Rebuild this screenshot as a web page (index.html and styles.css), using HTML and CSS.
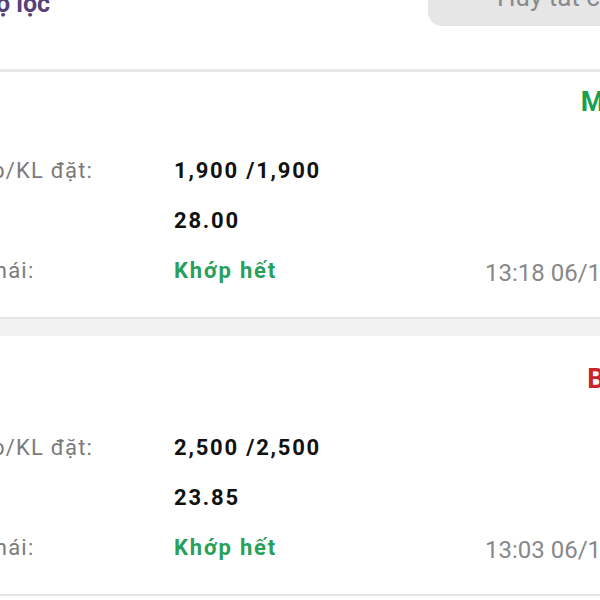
FILE: index.html
```html
<!DOCTYPE html>
<html lang="vi">
<head>
    <meta charset="UTF-8" />
    <title>Sổ lệnh</title>
    <link rel="stylesheet" href="styles.css">
</head>
<body>
    <div class="screen">
        <div class="toolbar">
            <svg class="filter-icon" width="28" height="28" viewBox="0 0 24 24" fill="none" stroke="#56427a" stroke-width="2">
                <path d="M3 5h18l-7 8v6l-4 2v-8z" />
            </svg>
            <span class="filter-title">Bộ lọc</span>
            <button class="cancel-all">Hủy tất cả</button>
        </div>

        <div class="order-list">
            <div class="order">
                <div class="order-head">
                    <span class="side buy">Mua</span>
                </div>
                <div class="order-row">
                    <span class="label">KL khớp/KL đặt:</span>
                    <span class="value">1,900 /1,900</span>
                </div>
                <div class="order-row">
                    <span class="label">Giá:</span>
                    <span class="value">28.00</span>
                </div>
                <div class="order-row">
                    <span class="label">Trạng thái:</span>
                    <span class="value status">Khớp hết</span>
                    <span class="time">13:18 06/12</span>
                </div>
            </div>

            <div class="order">
                <div class="order-head">
                    <span class="side sell">Bán</span>
                </div>
                <div class="order-row">
                    <span class="label">KL khớp/KL đặt:</span>
                    <span class="value">2,500 /2,500</span>
                </div>
                <div class="order-row">
                    <span class="label">Giá:</span>
                    <span class="value">23.85</span>
                </div>
                <div class="order-row">
                    <span class="label">Trạng thái:</span>
                    <span class="value status">Khớp hết</span>
                    <span class="time">13:03 06/12</span>
                </div>
            </div>
        </div>
    </div>
</body>
</html>
```

FILE: styles.css
```css
* {
    margin: 0;
    padding: 0;
    box-sizing: border-box;
    font-family: Roboto, 'Noto Sans', sans-serif;
}

body {
    background: #fff;
    overflow: hidden;
    height: 600px;
}

/* ekran görüntüsü kırpılmış: sol ve üst taraf dışarıda kalıyor */
.screen {
    width: 748px;
    margin: -33px 0 0 -98px;
}

.toolbar {
    display: flex;
    align-items: center;
    gap: 34px;
    height: 105px;
    padding: 0 16px 45px;
    border-bottom: 3px solid #e8e8e8;
}

.filter-title {
    padding-top: 16px;
    color: #56427a;
    font-size: 25px;
    font-weight: 700;
}

.cancel-all {
    margin-left: auto;
    margin-right: -16px;
    width: 222px;
    height: 60px;
    padding: 2px 0 0 69px;
    text-align: left;
    white-space: nowrap;
    border: none;
    border-radius: 0 0 0 14px;
    background: #e6e6e6;
    color: #8a8a8a;
    font-size: 26px;
}

.order-list {
    background: #f2f2f2;
}

.order {
    background: #fff;
    padding: 25px 16px 22px;
    border-bottom: 2px solid #e6e6e6;
    margin-bottom: 17px;
}

.order:first-child {
    padding-top: 12px;
}

.order-head {
    display: flex;
    justify-content: flex-end;
    height: 36px;
    line-height: 36px;
    margin-bottom: 25px;
}

.side {
    font-size: 27px;
    font-weight: 700;
}

.buy {
    color: #17a14f;
}

.sell {
    color: #c8252c;
}

.order-row {
    display: grid;
    grid-template-columns: 256px 311px 1fr;
    align-items: center;
    height: 50px;
}

.label {
    color: #7b7b7b;
    font-size: 22px;
    letter-spacing: 1.2px;
}

.value {
    color: #111;
    font-size: 22px;
    font-weight: 700;
    letter-spacing: 1.8px;
}

.status {
    color: #27a05a;
}

.time {
    margin-top: 6px;
    color: #888;
    font-size: 24px;
}
```
